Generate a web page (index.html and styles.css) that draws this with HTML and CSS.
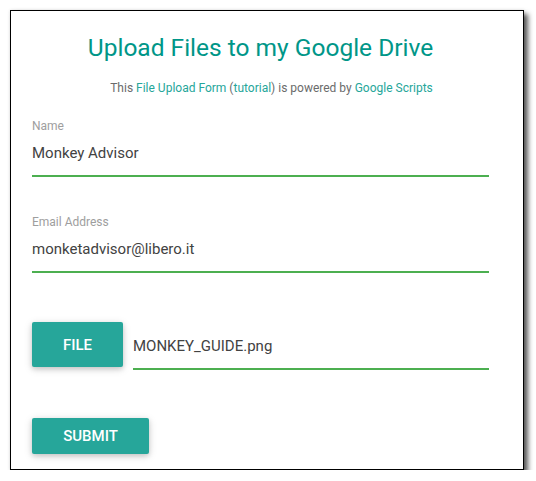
FILE: index.html
```html
<!DOCTYPE html>
<html lang="en">
<head>
<meta charset="utf-8">
<title>Upload Files to my Google Drive</title>
<link rel="stylesheet" href="styles.css">
</head>
<body>
<div class="frame">
  <form class="upload-form">
    <h1 class="title">Upload Files to my Google Drive</h1>
    <p class="subtitle">This <a href="#">File Upload Form</a> (<a href="#">tutorial</a>) is powered by <a href="#">Google Scripts</a></p>

    <div class="field field-name">
      <label class="field-label">Name</label>
      <div class="field-input">Monkey Advisor</div>
    </div>

    <div class="field field-email">
      <label class="field-label">Email Address</label>
      <div class="field-input">monketadvisor@libero.it</div>
    </div>

    <div class="file-row">
      <span class="btn btn-file">FILE</span>
      <div class="field-input file-path">MONKEY_GUIDE.png</div>
    </div>

    <div class="submit-row">
      <span class="btn btn-submit">SUBMIT</span>
    </div>
  </form>
</div>
</body>
</html>
```
FILE: styles.css
```css
html, body {
  margin: 0;
  padding: 0;
  background: #ffffff;
}

body {
  font-family: Roboto, "Liberation Sans", Arial, sans-serif;
}

.frame {
  box-sizing: border-box;
  margin: 10px 0 0 10px;
  width: 514px;
  height: 460px;
  border: 1px solid #000;
  background: #fff;
  box-shadow: 4px 4px 5px rgba(0, 0, 0, 0.65), 0 0 3px rgba(0, 0, 0, 0.12);
  padding: 0 34px 0 21px;
}

.upload-form {
  display: flex;
  flex-direction: column;
}

.title {
  margin: 23px 0 0;
  font-size: 24.5px;
  line-height: 28px;
  font-weight: 400;
  color: #009688;
  text-align: center;
}

.subtitle {
  margin: 18px 0 0;
  padding-left: 22px;
  font-size: 12px;
  line-height: 16px;
  color: #6b6b6b;
  text-align: center;
}

.subtitle a {
  color: #26a69a;
  text-decoration: none;
}

.field {
  display: flex;
  flex-direction: column;
}

.field-name {
  margin-top: 22px;
}

.field-email {
  margin-top: 37px;
}

.field-label {
  font-size: 12px;
  line-height: 16px;
  color: #9e9e9e;
}

.field-input {
  margin-top: 9px;
  font-size: 15px;
  line-height: 20px;
  color: #424242;
  padding-bottom: 12px;
  border-bottom: 2px solid #4caf50;
}

.file-row {
  display: flex;
  align-items: flex-start;
  gap: 10px;
  margin-top: 49px;
}

.file-path {
  flex: 1;
  margin-top: 14px;
}

.btn {
  display: flex;
  align-items: center;
  justify-content: center;
  padding: 0 31px;
  background: #26a69a;
  color: #fff;
  font-size: 15px;
  font-weight: 500;
  border-radius: 2px;
  box-shadow: 0 2px 5px rgba(0, 0, 0, 0.16), 0 2px 10px rgba(0, 0, 0, 0.12);
}

.btn-file {
  height: 45px;
  width: 91px;
  box-sizing: border-box;
}

.submit-row {
  display: flex;
  margin-top: 48px;
}

.btn-submit {
  height: 36px;
  width: 117px;
  box-sizing: border-box;
}
```
